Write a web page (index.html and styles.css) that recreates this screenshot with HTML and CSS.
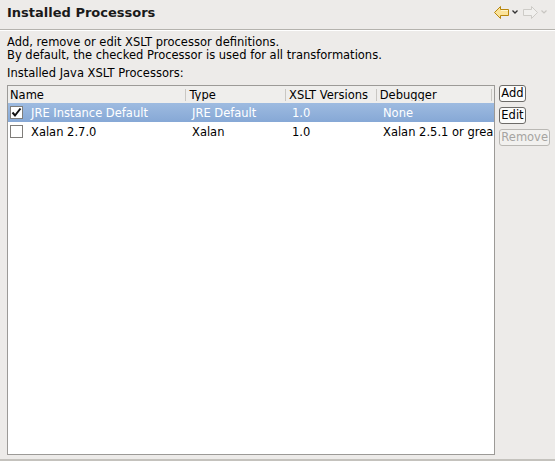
FILE: index.html
```html
<!DOCTYPE html>
<html>
<head>
<meta charset="utf-8">
<link rel="stylesheet" href="styles.css">
</head>
<body>
<div class="page">
  <div class="titlebar">
    <h1 class="title">Installed Processors</h1>
    <div class="nav">
      <svg class="arrow" width="15" height="13" viewBox="0 0 15 13">
        <path d="M0.5 6.5 L6.5 0.5 L6.5 3.5 L14.5 3.5 L14.5 9.5 L6.5 9.5 L6.5 12.5 Z" fill="#fbe39a" stroke="#b8860b" stroke-width="1"/>
        <path d="M7 4.5 L14 4.5" stroke="#fff6cf" stroke-width="1"/>
      </svg>
      <svg class="chev" width="6" height="4" viewBox="0 0 6 4"><path d="M0.5 0.5 L3 3 L5.5 0.5" fill="none" stroke="#333" stroke-width="1.3"/></svg>
      <svg class="arrow" width="15" height="13" viewBox="0 0 15 13">
        <path d="M14.5 6.5 L8.5 0.5 L8.5 3.5 L0.5 3.5 L0.5 9.5 L8.5 9.5 L8.5 12.5 Z" fill="#f1f0ee" stroke="#cdcbc7" stroke-width="1"/>
      </svg>
      <svg class="chev" width="6" height="4" viewBox="0 0 6 4"><path d="M0.5 0.5 L3 3 L5.5 0.5" fill="none" stroke="#c8c6c2" stroke-width="1.2"/></svg>
    </div>
  </div>
  <div class="content">
    <p class="desc">Add, remove or edit XSLT processor definitions.<br>By default, the checked Processor is used for all transformations.</p>
    <p class="label">Installed Java XSLT Processors:</p>
    <div class="main">
      <div class="table">
        <div class="row head">
          <div class="cell c1">Name</div>
          <div class="cell c2">Type</div>
          <div class="cell c3">XSLT Versions</div>
          <div class="cell c4">Debugger</div>
          <div class="cell c5"></div>
        </div>
        <div class="row sel">
          <div class="cell c1"><span class="check on"><svg width="11" height="11" viewBox="0 0 11 11"><path d="M1.5 5.5 L4 8.5 L9.5 1.5" fill="none" stroke="#111" stroke-width="2"/></svg></span>JRE Instance Default</div>
          <div class="cell c2">JRE Default</div>
          <div class="cell c3">1.0</div>
          <div class="cell c4">None</div>
        </div>
        <div class="row">
          <div class="cell c1"><span class="check"></span>Xalan 2.7.0</div>
          <div class="cell c2">Xalan</div>
          <div class="cell c3">1.0</div>
          <div class="cell c4 clip"><span>Xalan 2.5.1 or great</span></div>
        </div>
      </div>
      <div class="buttons">
        <button class="btn">Add</button>
        <button class="btn">Edit</button>
        <button class="btn" disabled>Remove</button>
      </div>
    </div>
  </div>
</div>
</body>
</html>
```
FILE: styles.css
```css
html, body {
  margin: 0;
  padding: 0;
  background: #edebe9;
}
body {
  font-family: "DejaVu Sans", sans-serif;
  font-size: 11.5px;
  color: #000;
}
.page {
  width: 555px;
  height: 461px;
  display: flex;
  flex-direction: column;
  overflow: hidden;
  border-bottom: 2px solid #c4c2bd;
  box-sizing: border-box;
}
.titlebar {
  height: 30px;
  display: flex;
  align-items: center;
  justify-content: space-between;
  padding: 0 8px 5px 7px;
  box-sizing: border-box;
  border-bottom: 1px solid #b4b2ad;
  box-shadow: 0 1px 0 #ffffff;
}
.title {
  margin: 0;
  font-size: 13px;
  font-weight: bold;
  color: #1a1a1a;
}
.nav {
  display: flex;
  align-items: center;
}
.nav svg { display: block; }
.nav .chev { margin: 0 5px 0 3px; }
.nav .chev:last-child { margin-right: 0; }
.content {
  flex: 1;
  display: flex;
  flex-direction: column;
  padding: 6px 5px 4px 7px;
}
.desc {
  margin: 0;
  line-height: 13px;
}
.label {
  margin: 5px 0 5px;
  line-height: 13px;
}
.main {
  flex: 1;
  display: flex;
  gap: 4px;
}
.table {
  width: 490px;
  background: #fff;
  border: 1px solid #9c9a97;
  box-sizing: border-box;
  overflow: hidden;
}
.row {
  display: flex;
  height: 19px;
  align-items: center;
  white-space: nowrap;
}
.row.head {
  height: 17px;
  background: #efeeec;
}
.row.head .cell {
  border-left: 1px solid #c9c7c3;
  height: 12px;
  line-height: 12px;
  padding-left: 2px;
}
.row.head .c1 { border-left: none; }
.row.sel {
  background: linear-gradient(#9ebbe0, #86a8d6);
  color: #fff;
}
.cell {
  box-sizing: border-box;
  overflow: hidden;
}
.c1 { width: 178px; padding-left: 2px; display: flex; align-items: center; }
.c2 { width: 100px; padding-left: 6px; }
.c3 { width: 91px; padding-left: 6px; }
.c4 { width: 116px; padding-left: 6px; }
.c5 { flex: 1; }
.row.head .c2, .row.head .c3, .row.head .c4 { padding-left: 3px; }
.check {
  width: 13px;
  height: 13px;
  background: #fff;
  border: 1px solid #7f7d7a;
  box-sizing: border-box;
  margin-right: 8px;
  display: flex;
  align-items: center;
  justify-content: center;
}
.check svg { display: block; }
.buttons {
  display: flex;
  flex-direction: column;
  align-items: flex-start;
  gap: 5px;
  margin-top: 0;
}
.btn {
  font-family: "DejaVu Sans", sans-serif;
  font-size: 11.5px;
  height: 17px;
  padding: 0 1px;
  border: 1px solid #6d6b68;
  border-radius: 3px;
  background: #fbfbfa;
  color: #000;
  line-height: 13px;
}
.btn:disabled {
  color: #a6a4a1;
  border-color: #bab8b4;
  background: #f2f1ef;
}
```
